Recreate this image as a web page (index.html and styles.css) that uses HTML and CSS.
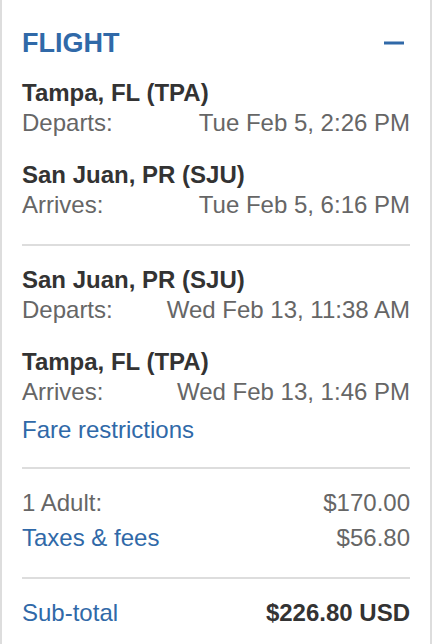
FILE: index.html
```html
<!DOCTYPE html>
<html lang="en">
<head>
<meta charset="utf-8">
<title>Flight summary</title>
<link rel="stylesheet" href="styles.css">
</head>
<body>
<div class="card">
  <div class="card-head">
    <h2 class="card-title">FLIGHT</h2>
    <button class="collapse" type="button" aria-label="Collapse">
      <svg width="20" height="4" viewBox="0 0 20 4"><rect x="0" y="0.5" width="20" height="3" fill="#3069a8"/></svg>
    </button>
  </div>

  <section class="leg">
    <div class="stop">
      <div class="city">Tampa, FL (TPA)</div>
      <div class="row"><span>Departs:</span><span>Tue Feb 5, 2:26 PM</span></div>
    </div>
    <div class="stop">
      <div class="city">San Juan, PR (SJU)</div>
      <div class="row"><span>Arrives:</span><span>Tue Feb 5, 6:16 PM</span></div>
    </div>
  </section>

  <hr class="divider">

  <section class="leg leg-second">
    <div class="stop">
      <div class="city">San Juan, PR (SJU)</div>
      <div class="row"><span>Departs:</span><span>Wed Feb 13, 11:38 AM</span></div>
    </div>
    <div class="stop">
      <div class="city">Tampa, FL (TPA)</div>
      <div class="row"><span>Arrives:</span><span>Wed Feb 13, 1:46 PM</span></div>
    </div>
    <a class="link fare-link" href="#">Fare restrictions</a>
  </section>

  <hr class="divider divider-fare">

  <section class="prices">
    <div class="row"><span>1 Adult:</span><span>$170.00</span></div>
    <div class="row row-taxes"><a class="link" href="#">Taxes &amp; fees</a><span>$56.80</span></div>
  </section>

  <hr class="divider">

  <section class="total">
    <div class="row"><a class="link" href="#">Sub-total</a><span class="total-value">$226.80 USD</span></div>
  </section>
</div>
</body>
</html>
```

FILE: styles.css
```css
* {
  box-sizing: border-box;
}

html, body {
  margin: 0;
  padding: 0;
  background: #ffffff;
}

body {
  font-family: "Liberation Sans", Arial, Helvetica, sans-serif;
  color: #666666;
}

.card {
  width: 432px;
  min-height: 100vh;
  border-left: 2px solid #dddddd;
  border-right: 2px solid #dddddd;
  padding: 27px 20px 0 20px;
}

.card-head {
  display: flex;
  justify-content: space-between;
  align-items: center;
  height: 32px;
}

.card-title {
  margin: 0;
  font-size: 27px;
  line-height: 32px;
  font-weight: bold;
  color: #3069a8;
}

.collapse {
  border: 0;
  background: none;
  padding: 0;
  margin-right: 6px;
  display: flex;
  cursor: pointer;
}

.leg {
  margin-top: 19px;
}

.leg-second {
  margin-top: 19px;
}

.stop + .stop {
  margin-top: 22px;
}

.city {
  font-size: 24px;
  line-height: 30px;
  font-weight: bold;
  color: #333333;
}

.row {
  display: flex;
  justify-content: space-between;
  font-size: 24px;
  line-height: 30px;
  color: #666666;
}

.link {
  color: #3069a8;
  text-decoration: none;
  font-size: 24px;
  line-height: 30px;
}

.fare-link {
  display: block;
  margin-top: 8px;
}

.divider {
  border: 0;
  height: 2px;
  background: #dddddd;
  margin: 24px 0 0 0;
}

.divider-fare {
  margin-top: 22px;
}

.prices {
  margin-top: 19px;
}

.row-taxes {
  margin-top: 5px;
}

.total {
  margin-top: 19px;
}

.total-value {
  font-weight: bold;
  color: #333333;
}
```
